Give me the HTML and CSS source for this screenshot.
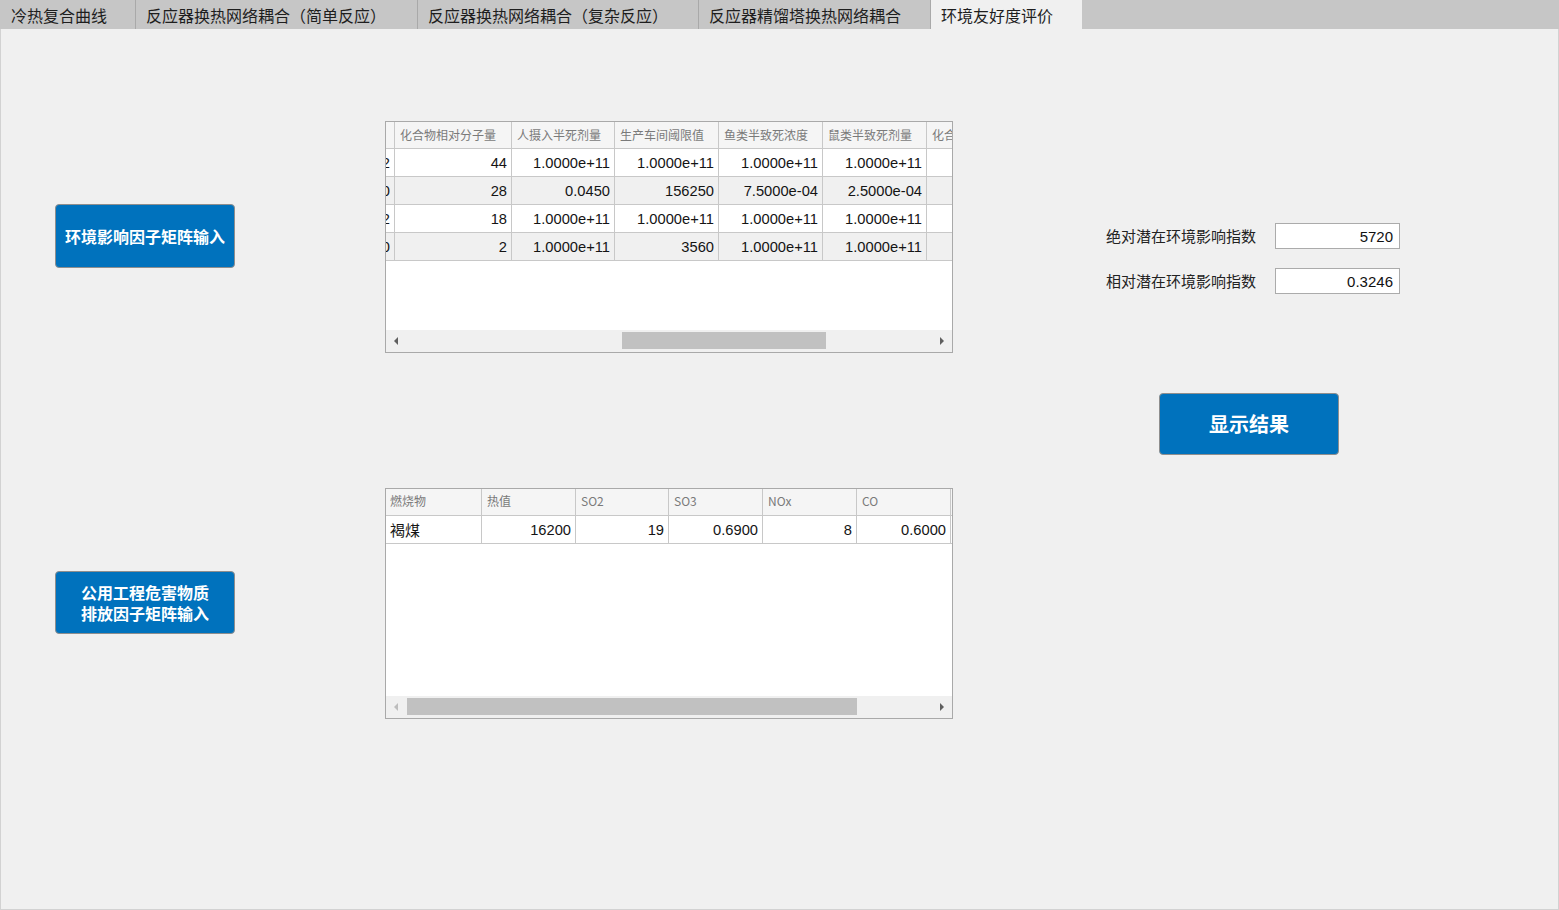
FILE: index.html
```html
<!DOCTYPE html>
<html lang="zh-CN">
<head>
<meta charset="utf-8">
<title>环境友好度评价</title>
<link rel="stylesheet" href="styles.css">
</head>
<body>
<div class="app">
  <div class="tabbar">
    <div class="tab t1">冷热复合曲线</div>
    <div class="tab t2">反应器换热网络耦合（简单反应）</div>
    <div class="tab t3">反应器换热网络耦合（复杂反应）</div>
    <div class="tab t4">反应器精馏塔换热网络耦合</div>
    <div class="tab t5 active">环境友好度评价</div>
  </div>
  <div class="panel">
    <div class="col-left">
      <button class="btn btn-a">环境影响因子矩阵输入</button>
      <button class="btn btn-b">公用工程危害物质<br>排放因子矩阵输入</button>
    </div>
    <div class="col-mid">
      <div class="grid grid-1">
        <div class="grid-body">
          <div class="row head">
            <div class="cell"></div>
            <div class="cell">化合物相对分子量</div>
            <div class="cell">人摄入半死剂量</div>
            <div class="cell">生产车间阈限值</div>
            <div class="cell">鱼类半致死浓度</div>
            <div class="cell">鼠类半致死剂量</div>
            <div class="cell">化合物</div>
          </div>
          <div class="row data">
            <div class="cell">2</div>
            <div class="cell">44</div>
            <div class="cell">1.0000e+11</div>
            <div class="cell">1.0000e+11</div>
            <div class="cell">1.0000e+11</div>
            <div class="cell">1.0000e+11</div>
            <div class="cell"></div>
          </div>
          <div class="row data alt">
            <div class="cell">0</div>
            <div class="cell">28</div>
            <div class="cell">0.0450</div>
            <div class="cell">156250</div>
            <div class="cell">7.5000e-04</div>
            <div class="cell">2.5000e-04</div>
            <div class="cell"></div>
          </div>
          <div class="row data">
            <div class="cell">2</div>
            <div class="cell">18</div>
            <div class="cell">1.0000e+11</div>
            <div class="cell">1.0000e+11</div>
            <div class="cell">1.0000e+11</div>
            <div class="cell">1.0000e+11</div>
            <div class="cell"></div>
          </div>
          <div class="row data alt">
            <div class="cell">0</div>
            <div class="cell">2</div>
            <div class="cell">1.0000e+11</div>
            <div class="cell">3560</div>
            <div class="cell">1.0000e+11</div>
            <div class="cell">1.0000e+11</div>
            <div class="cell"></div>
          </div>
        </div>
        <div class="hscroll">
          <div class="arrow arrow-l"></div>
          <div class="track"><div class="thumb" style="margin-left:219px;width:204px"></div></div>
          <div class="arrow arrow-r"></div>
        </div>
      </div>

      <div class="grid grid-2">
        <div class="grid-body">
          <div class="row head">
            <div class="cell">燃烧物</div>
            <div class="cell">热值</div>
            <div class="cell">SO2</div>
            <div class="cell">SO3</div>
            <div class="cell">NOx</div>
            <div class="cell">CO</div>
          </div>
          <div class="row data">
            <div class="cell text">褐煤</div>
            <div class="cell">16200</div>
            <div class="cell">19</div>
            <div class="cell">0.6900</div>
            <div class="cell">8</div>
            <div class="cell">0.6000</div>
          </div>
        </div>
        <div class="hscroll">
          <div class="arrow arrow-l disabled"></div>
          <div class="track"><div class="thumb" style="margin-left:4px;width:450px"></div></div>
          <div class="arrow arrow-r"></div>
        </div>
      </div>
    </div>
    <div class="col-right">
      <div class="field">
        <div class="label">绝对潜在环境影响指数</div>
        <div class="input">5720</div>
      </div>
      <div class="field">
        <div class="label">相对潜在环境影响指数</div>
        <div class="input">0.3246</div>
      </div>
      <button class="btn btn-c">显示结果</button>
    </div>
  </div>
</div>
</body>
</html>
```
FILE: styles.css
```css
* { box-sizing: border-box; }

body {
  margin: 0;
  background: #f0f0f0;
  font-family: "Noto Sans CJK SC", "Liberation Sans", sans-serif;
  overflow: hidden;
}

.app {
  width: 1559px;
  height: 910px;
  display: flex;
  flex-direction: column;
}

/* ---------- tabs ---------- */
.tabbar {
  flex: none;
  height: 29px;
  display: flex;
  background: #c6c6c6;
}

.tab {
  height: 29px;
  display: flex;
  align-items: center;
  padding: 1px 0 0 10px;
  font-size: 16px;
  color: #1e1e1e;
  white-space: nowrap;
  border-right: 1px solid #a9a9a9;
}

.t1 { width: 136px; padding-left: 11px; }
.t2 { width: 282px; }
.t3 { width: 281px; }
.t4 { width: 232px; }
.t5 { width: 151px; }

.tab.active {
  background: #f0f0f0;
  border-right: none;
}

/* ---------- panel ---------- */
.panel {
  flex: 1;
  display: flex;
  align-items: flex-start;
  border-left: 1px solid #d2d2d2;
  border-right: 1px solid #d2d2d2;
  border-bottom: 1px solid #d2d2d2;
}

.col-left {
  flex: none;
  width: 180px;
  margin-left: 54px;
  padding-top: 175px;
  display: flex;
  flex-direction: column;
}

.btn {
  width: 180px;
  padding: 0;
  background: #0072bd;
  color: #fff;
  border: 1px solid #8e8e8e;
  border-radius: 4px;
  font-family: "Noto Sans CJK SC", sans-serif;
  font-weight: 700;
  font-size: 16px;
  line-height: 21px;
  text-align: center;
}

.btn-a { height: 64px; }
.btn-b { height: 63px; margin-top: 303px; }

.btn-c {
  height: 62px;
  margin-top: 99px;
  margin-left: 53px;
  font-size: 20px;
  line-height: 26px;
}

/* ---------- tables ---------- */
.col-mid {
  flex: none;
  width: 568px;
  margin-left: 150px;
  padding-top: 92px;
  display: flex;
  flex-direction: column;
}

.grid {
  border: 1px solid #a9a9a9;
  background: #fff;
  display: flex;
  flex-direction: column;
  overflow: hidden;
}

.grid-1 { height: 232px; }
.grid-2 { height: 231px; margin-top: 135px; }

.grid-body {
  flex: 1;
  overflow: hidden;
  background: #fff;
}

.row {
  display: grid;
  border-bottom: 1px solid #c8c8c8;
}

.grid-1 .row {
  width: max-content;
  grid-template-columns: 9px 117px 103px 104px 104px 104px 60px;
}

.grid-2 .row {
  grid-template-columns: 96px 94px 93px 94px 94px 94px;
}

.row.head {
  height: 27px;
  background: #f5f5f5;
}

.row.data {
  height: 28px;
  background: #fff;
}

.row.alt { background: #f0f0f0; }

.cell {
  display: flex;
  align-items: center;
  overflow: hidden;
  white-space: nowrap;
  border-right: 1px solid #c8c8c8;
}

.head .cell {
  padding-left: 5px;
  padding-bottom: 2px;
  font-size: 12px;
  color: #7a7a7a;
}

.grid-2 .head .cell { padding-bottom: 3px; }
.grid-2 .head .cell:first-child { padding-left: 4px; }

.data .cell {
  justify-content: flex-end;
  padding-right: 4px;
  font-family: "Liberation Sans", "Noto Sans CJK SC", sans-serif;
  font-size: 14.7px;
  color: #141414;
}

.data .cell.text {
  justify-content: flex-start;
  padding-left: 4px;
  font-family: "Noto Sans CJK SC", sans-serif;
  font-size: 15px;
}

/* ---------- horizontal scrollbar ---------- */
.hscroll {
  flex: none;
  height: 22px;
  background: #f0f0f0;
  display: flex;
}

.arrow {
  flex: none;
  width: 17px;
  display: flex;
  align-items: center;
}

.arrow-l { padding-left: 8px; }
.arrow-r { padding-left: 5px; }

.arrow::before {
  content: "";
  display: block;
  border-top: 4.5px solid transparent;
  border-bottom: 4.5px solid transparent;
}

.arrow-l::before { border-right: 4px solid #5f5f5f; }
.arrow-r::before { border-left: 4px solid #5f5f5f; }
.arrow-l.disabled::before { border-right-color: #bdbdbd; }

.track {
  flex: 1;
  display: flex;
  align-items: flex-start;
  padding-top: 2px;
}

.thumb {
  height: 17px;
  background: #c1c1c1;
}

/* ---------- right column ---------- */
.col-right {
  flex: none;
  margin-left: 153px;
  padding-top: 194px;
  display: flex;
  flex-direction: column;
}

.field {
  display: flex;
  align-items: center;
  height: 26px;
}

.field + .field { margin-top: 19px; }

.label {
  width: 169px;
  padding-bottom: 2px;
  font-size: 15px;
  color: #222;
  white-space: nowrap;
}

.input {
  width: 125px;
  height: 26px;
  border: 1px solid #ababab;
  background: #fff;
  display: flex;
  align-items: center;
  justify-content: flex-end;
  padding-right: 6px;
  font-family: "Liberation Sans", sans-serif;
  font-size: 15px;
  color: #111;
}
```
